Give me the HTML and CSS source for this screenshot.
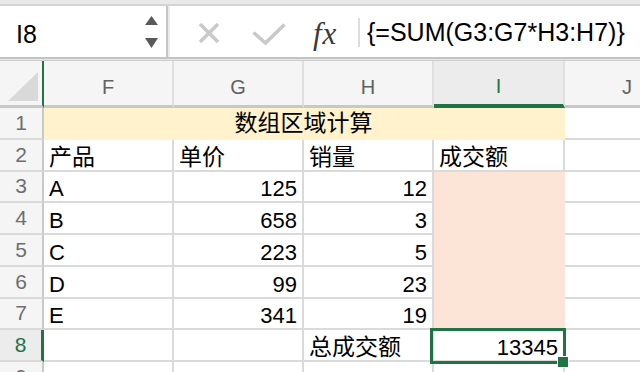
FILE: index.html
```html
<!DOCTYPE html>
<html lang="zh">
<head>
<meta charset="utf-8">
<title>数组区域计算</title>
<link rel="stylesheet" href="styles.css">
</head>
<body>
<div class="topstrip"></div>
<div class="toolbar">
  <div class="namebox">
    <span class="ref">I8</span>
    <svg class="stepper" viewBox="0 0 13 32" width="13" height="32"><polygon points="0,9 6.5,0 13,9"/><polygon points="0,22 13,22 6.5,32"/></svg>
  </div>
  <div class="sep"></div>
  <div class="fbar">
    <svg class="icon-x" viewBox="0 0 22 22" width="22" height="22"><path d="M2 2 L20 20 M20 2 L2 20"/></svg>
    <svg class="icon-check" viewBox="0 0 34 22" width="34" height="22"><path d="M1.5 9.5 L13.5 20 L32.5 1.5"/></svg>
    <span class="fx">fx</span>
    <div class="vline"></div>
    <span class="formula">{=SUM(G3:G7*H3:H7)}</span>
  </div>
</div>
<div class="toolgap"></div>
<div class="sheet">
  <div class="corner"><svg viewBox="0 0 42 44" width="42" height="44"><polygon points="8,40 38,40 38,11"/></svg></div>
  <div class="ch">F</div>
  <div class="ch">G</div>
  <div class="ch">H</div>
  <div class="ch sel">I</div>
  <div class="ch">J</div>

  <div class="rh">1</div>
  <div class="c title"><span class="zh">数组区域计算</span></div>
  <div class="c"></div>

  <div class="rh">2</div>
  <div class="c"><span class="zh">产品</span></div>
  <div class="c"><span class="zh">单价</span></div>
  <div class="c"><span class="zh">销量</span></div>
  <div class="c"><span class="zh">成交额</span></div>
  <div class="c"></div>

  <div class="rh">3</div>
  <div class="c">A</div>
  <div class="c num">125</div>
  <div class="c num">12</div>
  <div class="c pink"></div>
  <div class="c"></div>

  <div class="rh">4</div>
  <div class="c">B</div>
  <div class="c num">658</div>
  <div class="c num">3</div>
  <div class="c pink"></div>
  <div class="c"></div>

  <div class="rh">5</div>
  <div class="c">C</div>
  <div class="c num">223</div>
  <div class="c num">5</div>
  <div class="c pink"></div>
  <div class="c"></div>

  <div class="rh">6</div>
  <div class="c">D</div>
  <div class="c num">99</div>
  <div class="c num">23</div>
  <div class="c pink"></div>
  <div class="c"></div>

  <div class="rh">7</div>
  <div class="c">E</div>
  <div class="c num">341</div>
  <div class="c num">19</div>
  <div class="c pink"></div>
  <div class="c"></div>

  <div class="rh sel">8</div>
  <div class="c"></div>
  <div class="c"></div>
  <div class="c"><span class="zh">总成交额</span></div>
  <div class="c num active">13345<div class="selbox"></div><div class="handle"></div></div>
  <div class="c"></div>

  <div class="rh">9</div>
  <div class="c"></div>
  <div class="c"></div>
  <div class="c"></div>
  <div class="c"></div>
  <div class="c"></div>
</div>
</body>
</html>
```
FILE: styles.css
```css
* { box-sizing: border-box; }
html, body { margin: 0; padding: 0; }
body {
  width: 640px;
  height: 372px;
  overflow: hidden;
  background: #fff;
  color: #000;
  font-family: "Liberation Sans", "Noto Sans CJK SC", sans-serif;
}

.topstrip {
  height: 6px;
  background: #e9e9e9;
  border-bottom: 2px solid #d4d4d4;
}

.toolbar {
  height: 53px;
  display: flex;
  background: #fff;
  border-bottom: 2px solid #c3c3c3;
}

.toolgap {
  height: 2px;
  background: #e8e8e8;
  border-bottom: 1px solid #cdcdcd;
}

.namebox {
  width: 166px;
  display: flex;
  align-items: center;
  padding-left: 16px;
  padding-right: 8px;
}
.ref {
  font-size: 25px;
  line-height: 29px;
  padding-top: 5px;
}
.stepper {
  margin-left: auto;
  display: block;
  fill: #595959;
}

.sep {
  width: 4px;
  border-left: 2px solid #c6c6c6;
  background: #ececec;
}

.fbar {
  flex: 1;
  display: flex;
  align-items: center;
  padding-left: 28px;
  white-space: nowrap;
}
.icon-x, .icon-check {
  display: block;
  fill: none;
  stroke: #c9c9c9;
  stroke-width: 3.6;
}
.icon-x { margin-top: 2px; }
.icon-check { margin-left: 32px; margin-top: 4px; }
.fx {
  margin-left: 27px;
  width: 30px;
  font-family: "Liberation Serif", serif;
  font-style: italic;
  font-size: 31px;
  line-height: 33px;
  padding-top: 4px;
  letter-spacing: 1px;
  color: #3a3a3a;
}
.vline {
  margin-left: 15px;
  margin-top: 2px;
  width: 2px;
  height: 29px;
  background: #dcdcdc;
}
.formula {
  margin-left: 7px;
  font-size: 25px;
  line-height: 29px;
  padding-top: 2px;
}

.sheet {
  display: grid;
  grid-template-columns: 44px 130px 130px 130px 131px 126px;
  grid-template-rows: 47px repeat(9, 31.75px);
}

.corner {
  background: #f5f5f5;
  border-right: 2px solid #217346;
  border-bottom: 3px solid #c8c8c8;
}
.corner svg { display: block; fill: #d9d9d9; }

.ch {
  background: #f5f5f5;
  border-right: 2px solid #e0e0e0;
  border-bottom: 3px solid #c8c8c8;
  display: flex;
  align-items: center;
  justify-content: center;
  padding-top: 8px;
  font-size: 20px;
  color: #616161;
}
.ch.sel {
  background: #ececec;
  border-bottom: 4px solid #217346;
  color: #217346;
}

.rh {
  background: #f5f5f5;
  border-right: 2px solid #c8c8c8;
  border-bottom: 2px solid #dadada;
  display: flex;
  align-items: center;
  justify-content: center;
  font-size: 21px;
  color: #6e6e6e;
}
.rh.sel {
  background: #ececec;
  border-right: 3px solid #217346;
  color: #217346;
}

.c {
  border-right: 2px solid #dadada;
  border-bottom: 2px solid #dadada;
  display: flex;
  align-items: flex-end;
  padding: 0 5px;
  font-size: 22px;
  line-height: 25px;
  white-space: nowrap;
}
.c.num { justify-content: flex-end; }
.c.title {
  grid-column: span 4;
  background: #fff2cc;
  border-color: #fff2cc;
  justify-content: center;
  align-items: center;
  padding-bottom: 4px;
}
.c.pink {
  background: #fce4d6;
  border-color: #fce4d6;
}
.c.active { position: relative; }

.zh {
  font-family: "Noto Sans CJK SC", sans-serif;
  font-size: 23px;
  line-height: 30px;
}

.selbox {
  position: absolute;
  left: -4px;
  right: -3px;
  top: -2px;
  bottom: -4px;
  border: 3px solid #217346;
}
.handle {
  position: absolute;
  right: -6px;
  bottom: -8px;
  width: 12px;
  height: 12px;
  background: #217346;
  border: 1px solid #fff;
}
```
